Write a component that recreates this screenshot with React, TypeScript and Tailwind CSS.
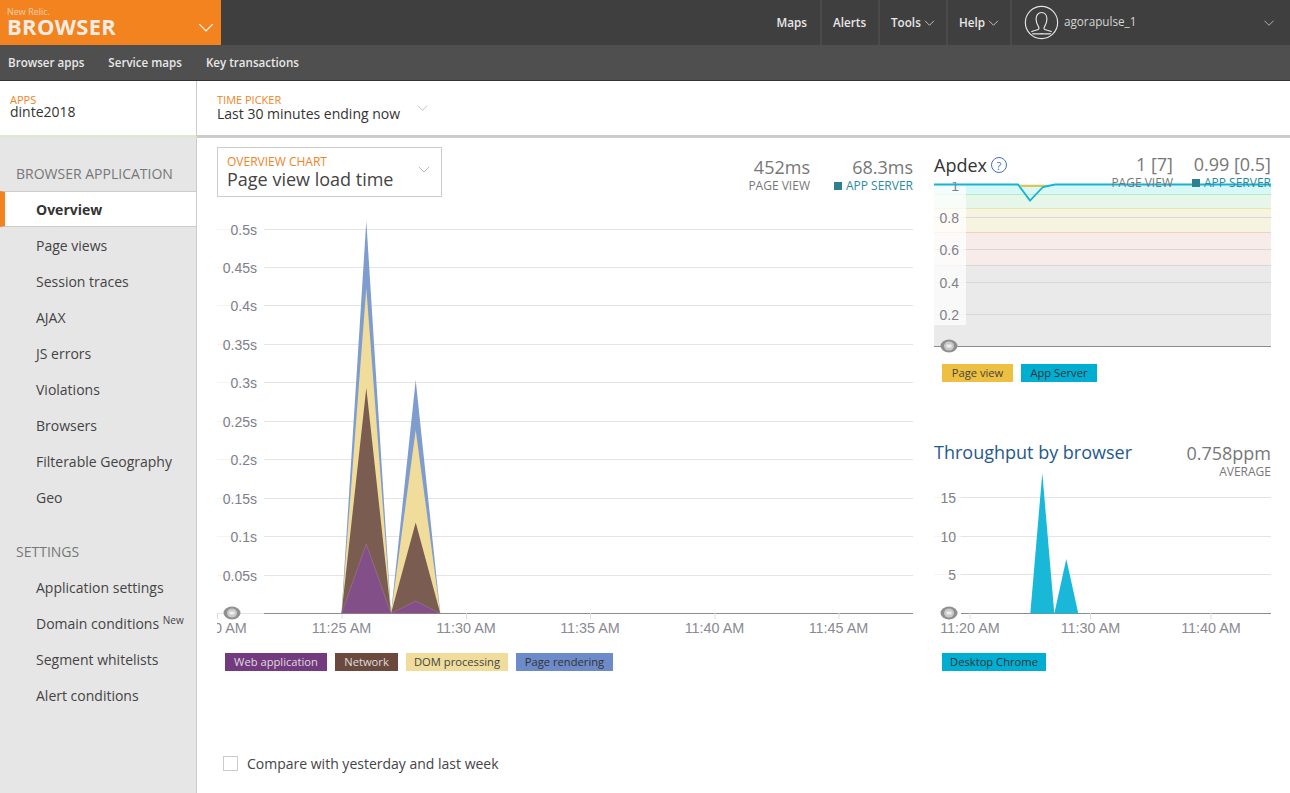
import React from 'react';

const Chevron = ({ className }: { className: string }) => (
  <svg viewBox="0 0 14 8" className={className} fill="none" stroke="currentColor" strokeWidth="1">
    <path d="M1 1l6 6 6-6" />
  </svg>
);

const Avatar = () => (
  <svg viewBox="0 0 36 36" className="h-[35px] w-[35px] shrink-0 text-[#e4e4e4]" fill="none" stroke="currentColor" strokeWidth="1.2">
    <circle cx="18" cy="18" r="16.6" />
    <path d="M7.5 27.5c3-1.6 6.2-1.6 7.5-2.6 .8-.7 .5-1.5 0-2.4-1.4-2.4-2.6-5-2.6-8 0-4 2.2-6.8 5.6-6.8s5.6 2.8 5.6 6.8c0 3-1.2 5.6-2.6 8-.5 .9-.8 1.7 0 2.4 1.3 1 4.5 1 7.5 2.6" />
    <path d="M8.5 29.5c3 .6 6 .2 9.500 0 3.500 .2 6.500 .6 9.500 0" />
  </svg>
);

const Knob = ({ cx, cy }: { cx: number; cy: number }) => (
  <g>
    <ellipse cx={cx} cy={cy} rx="8.500" ry="6.500" fill="#8f8f8f" />
    <ellipse cx={cx} cy={cy} rx="5" ry="4.500" fill="#c9c9c9" />
    <rect x={cx - 2.500} y={cy - 1.500} width="5" height="3" fill="#eeeeee" />
  </g>
);

const mainGrid = [
  ['0.5s', 229.5],
  ['0.45s', 267.5],
  ['0.4s', 305.5],
  ['0.35s', 344.5],
  ['0.3s', 382.5],
  ['0.25s', 421.5],
  ['0.2s', 459.5],
  ['0.15s', 498.5],
  ['0.1s', 536.5],
  ['0.05s', 575.5],
] as const;

const mainTicks = [
  ['11:20 AM', 217],
  ['11:25 AM', 341.5],
  ['11:30 AM', 466],
  ['11:35 AM', 590],
  ['11:40 AM', 714.5],
  ['11:45 AM', 838.5],
] as const;

const MainChart = () => (
  <svg viewBox="217 215 696 425" className="block h-[425px] w-[696px]" style={{ fontFamily: '"Liberation Sans", sans-serif' }}>
    {mainGrid.map(([label, y]) => (
      <g key={label}>
        <line x1="217" x2="257" y1={y} y2={y} stroke="#f4f4f4" />
        <line x1="264" x2="913" y1={y} y2={y} stroke="#e4e4e4" />
        <text x="257" y={y + 5} textAnchor="end" fontSize="14" fill="#80808a">{label}</text>
      </g>
    ))}
    <line x1="217" x2="264" y1="613.5" y2="613.5" stroke="#e4e4e4" />
    <line x1="264" x2="913" y1="613.5" y2="613.5" stroke="#8c8c8c" />
    {mainTicks.map(([label, x]) => (
      <g key={label}>
        <line x1={x + 0.5} x2={x + 0.5} y1="613" y2="619" stroke="#dddddd" />
        <text x={x} y="633" textAnchor="middle" fontSize="14.4" fill="#8a8a92">{label}</text>
      </g>
    ))}
    <path d="M341.500 613.500L366.300 221L391 613.500L415.700 380L440.300 613.500Z" fill="#7f9ccf" />
    <path d="M341.500 613.500L366.300 288L391 613.500L415.700 430L440.300 613.500Z" fill="#f0dd9c" />
    <path d="M341.500 613.500L366.300 388L391 613.500L415.700 522.500L440.300 613.500Z" fill="#7a5c50" />
    <path d="M341.500 613.500L366.300 544L391 613.500L415.700 601L440.300 613.500Z" fill="#824f88" stroke="#9a7a90" strokeWidth="0.6" />
    <Knob cx={232} cy={613} />
  </svg>
);

const apdexLines = [
  ['0.8', 217.5],
  ['0.6', 249.5],
  ['0.4', 282.5],
  ['0.2', 314.5],
] as const;

const ApdexChart = () => (
  <svg viewBox="934 182 337 172" className="block h-[172px] w-[337px]" style={{ fontFamily: '"Liberation Sans", sans-serif' }}>
    <rect x="934" y="184" width="337" height="10" fill="#d8f8f8" />
    <rect x="934" y="194" width="337" height="14.500" fill="#e6f6e8" />
    <rect x="934" y="208.500" width="337" height="24" fill="#f6f3e0" />
    <rect x="934" y="232.500" width="337" height="33" fill="#f8eceb" />
    <rect x="934" y="265.500" width="337" height="81" fill="#eaeaea" />
    <line x1="934" x2="1271" y1="194.500" y2="194.500" stroke="#b5ecc4" />
    <line x1="934" x2="1271" y1="208.500" y2="208.500" stroke="#e4e6b4" />
    <line x1="934" x2="1271" y1="232.500" y2="232.500" stroke="#f2cfc0" />
    <line x1="934" x2="1271" y1="265.500" y2="265.500" stroke="#d8d8d8" />
    {apdexLines.map(([, y]) => (
      <line key={y} x1="934" x2="1271" y1={y} y2={y} stroke="#d8d8d8" />
    ))}
    <rect x="934" y="184" width="32" height="141" fill="#ffffff" fillOpacity="0.72" />
    <text x="959" y="191" textAnchor="end" fontSize="14" fill="#80808a">1</text>
    {apdexLines.map(([label, y]) => (
      <text key={label} x="959" y={y + 5} textAnchor="end" fontSize="14" fill="#80808a">{label}</text>
    ))}
    <line x1="934" x2="1271" y1="346.500" y2="346.500" stroke="#8c8c8c" />
    <path d="M1018 185L1055 185L1043 187L1022 187Z" fill="#ecc043" />
    <path d="M934 184.500H1018L1030 200.500L1043 187L1055 184.500H1271" fill="none" stroke="#16b4cf" strokeWidth="1.8" />
    <Knob cx={949} cy={346} />
  </svg>
);

const tpGrid = [
  ['15', 497.5],
  ['10', 536.5],
  ['5', 574.5],
] as const;

const tpTicks = [
  ['11:20 AM', 970],
  ['11:30 AM', 1090.5],
  ['11:40 AM', 1211],
] as const;

const ThroughputChart = () => (
  <svg viewBox="934 470 337 170" className="block h-[170px] w-[337px]" style={{ fontFamily: '"Liberation Sans", sans-serif' }}>
    {tpGrid.map(([label, y]) => (
      <g key={label}>
        <line x1="934" x2="961" y1={y} y2={y} stroke="#f4f4f4" />
        <line x1="961" x2="1271" y1={y} y2={y} stroke="#e4e4e4" />
        <text x="956" y={y + 5} textAnchor="end" fontSize="14" fill="#80808a">{label}</text>
      </g>
    ))}
    <line x1="961" x2="1271" y1="613.500" y2="613.500" stroke="#8c8c8c" />
    {tpTicks.map(([label, x]) => (
      <g key={label}>
        <line x1={x} x2={x} y1="613" y2="619" stroke="#dddddd" />
        <text x={x} y="633" textAnchor="middle" fontSize="14.4" fill="#8a8a92">{label}</text>
      </g>
    ))}
    <path d="M1030.300 613.500L1042.300 473L1054.300 613.500Z" fill="#1ab8d8" />
    <path d="M1054.300 613.500L1066.300 559L1078.300 613.500Z" fill="#1ab8d8" />
    <Knob cx={949} cy={613} />
  </svg>
);

const Legend = ({ bg, text, width, children }: { bg: string; text: string; width: string; children: string }) => (
  <span className={`flex h-[18px] items-center justify-center text-[11.2px] ${bg} ${text} ${width}`}>{children}</span>
);

const SideItem = ({ children, active }: { children: React.ReactNode; active?: boolean }) => (
  <li
    className={
      active
        ? 'flex h-[36px] items-center border-y border-[#cccccc] border-l-[5px] border-l-[#f2831f] bg-white pl-[31px] font-bold text-[#333333]'
        : 'flex h-[36px] items-center pl-[36px] text-[#444444]'
    }
  >
    <span>{children}</span>
  </li>
);

export default function App() {
  return (
    <div className="flex h-[793px] w-[1290px] flex-col overflow-hidden bg-white text-[14px]" style={{ fontFamily: '"Open Sans", sans-serif' }}>
      {/* top nav */}
      <div className="flex h-[45px] bg-[#3f3f3f] text-[11.7px] font-semibold text-[#e8e8e8]">
        <div className="flex w-[221px] justify-between bg-[#f2831f] pl-[7px] pr-[7px] text-[#f3ece4]">
          <div>
            <div className="mt-[7px] text-[9px] leading-[10px] font-normal opacity-70">New Relic.</div>
            <div className="text-[22px] leading-[19px] font-bold tracking-[0.3px]">BROWSER</div>
          </div>
          <Chevron className="mt-[23px] h-[9px] w-[16px] text-white" />
        </div>
        <div className="flex flex-1 items-center justify-end">
          <div className="flex h-full items-center pr-[13px]">Maps</div>
          <div className="flex h-full w-[58px] items-center border-l-2 border-[#4a4a4a] pl-[11px]">Alerts</div>
          <div className="flex h-full w-[68px] items-center gap-[3px] border-l-2 border-[#4a4a4a] pl-[11px]">
            Tools <Chevron className="h-[6px] w-[11px]" />
          </div>
          <div className="flex h-full w-[64px] items-center gap-[3px] border-l-2 border-[#4a4a4a] pl-[11px]">
            Help <Chevron className="h-[6px] w-[11px]" />
          </div>
          <div className="flex h-full w-[280px] items-center border-l-2 border-[#4a4a4a] pl-[12px] pr-[15px] font-normal text-[#d5d5d5]">
            <Avatar />
            <span className="ml-[5px] flex-1 pb-[1px]">agorapulse_1</span>
            <Chevron className="h-[6px] w-[12px]" />
          </div>
        </div>
      </div>

      {/* sub nav */}
      <div className="flex h-[36px] items-center gap-[24px] border-b border-[#333333] bg-[#4f4f4f] pl-[8px] text-[11.6px] font-semibold text-[#e8e8e8]">
        <span>Browser apps</span>
        <span>Service maps</span>
        <span>Key transactions</span>
      </div>

      {/* picker row */}
      <div className="flex h-[57px] border-b-[3px] border-[#cccccc]">
        <div className="-mb-[3px] w-[197px] border-r border-[#cccccc] border-b-[3px] border-b-[#e0e8d4] pl-[10px] pt-[13px]">
          <div className="text-[11px] leading-[12px] text-[#f2831f]">APPS</div>
          <div className="text-[14px] leading-[12px] text-[#333333]">dinte2018</div>
        </div>
        <div className="flex pl-[20px] pt-[13px]">
          <div>
            <div className="text-[11px] leading-[12px] text-[#f2831f]">TIME PICKER</div>
            <div className="text-[14px] leading-[15px] text-[#333333]">Last 30 minutes ending now</div>
          </div>
          <Chevron className="ml-[17px] mt-[11px] h-[6px] w-[11px] text-[#aaaaaa]" />
        </div>
      </div>

      <div className="flex flex-1">
        {/* sidebar */}
        <div className="w-[197px] border-r border-[#cccccc] bg-[#e6e6e6] pt-[26px]">
          <div className="pl-[16px] leading-[20px] text-[#777777]">BROWSER APPLICATION</div>
          <ul className="mt-[7px]">
            <SideItem active>Overview</SideItem>
            <SideItem>Page views</SideItem>
            <SideItem>Session traces</SideItem>
            <SideItem>AJAX</SideItem>
            <SideItem>JS errors</SideItem>
            <SideItem>Violations</SideItem>
            <SideItem>Browsers</SideItem>
            <SideItem>Filterable Geography</SideItem>
            <SideItem>Geo</SideItem>
          </ul>
          <div className="mt-[27px] pl-[16px] leading-[20px] text-[#777777]">SETTINGS</div>
          <ul className="mt-[7px]">
            <SideItem>Application settings</SideItem>
            <SideItem>
              Domain conditions <sup className="text-[10px] leading-none">New</sup>
            </SideItem>
            <SideItem>Segment whitelists</SideItem>
            <SideItem>Alert conditions</SideItem>
          </ul>
        </div>

        {/* left column */}
        <div className="w-[716px] pl-[20px] pt-[9px]">
          <div className="flex items-start justify-between">
            <div className="flex h-[50px] w-[225px] justify-between border border-[#cccccc] pl-[9px] pr-[11px] pt-[7px]">
              <div>
                <div className="text-[12px] leading-[13px] text-[#f2831f]">OVERVIEW CHART</div>
                <div className="text-[18px] leading-[23px] text-[#444444]">Page view load time</div>
              </div>
              <Chevron className="mt-[11px] h-[7px] w-[12px] text-[#aaaaaa]" />
            </div>
            <div className="flex gap-[24px] pt-[10px] text-right">
              <div>
                <div className="text-[18px] leading-[20px] text-[#777777]">452ms</div>
                <div className="text-[12px] leading-[18px] text-[#777777]">PAGE VIEW</div>
              </div>
              <div>
                <div className="text-[18px] leading-[20px] text-[#777777]">68.3ms</div>
                <div className="flex items-center text-[12px] leading-[18px] text-[#2b8aa0]">
                  <span className="mr-[4px] h-[8px] w-[8px] bg-[#2f7f93]" />
                  APP SERVER
                </div>
              </div>
            </div>
          </div>
          <div className="mt-[18px]">
            <MainChart />
          </div>
          <div className="mt-[13px] flex gap-[8px] pl-[8px]">
            <Legend bg="bg-[#733a80]" text="text-[#dddddd]" width="w-[102px]">Web application</Legend>
            <Legend bg="bg-[#6b4a3d]" text="text-[#dddddd]" width="w-[63px]">Network</Legend>
            <Legend bg="bg-[#f0dd9c]" text="text-[#444444]" width="w-[102px]">DOM processing</Legend>
            <Legend bg="bg-[#6d8bc8]" text="text-[#333333]" width="w-[97px]">Page rendering</Legend>
          </div>
          <label className="mt-[82px] flex items-center pl-[6px] text-[14px] text-[#444444]">
            <span className="mr-[9px] h-[15px] w-[15px] border border-[#cccccc] bg-white" />
            Compare with yesterday and last week
          </label>
        </div>

        {/* right column */}
        <div className="ml-[21px] w-[337px] pt-[15px]">
          <div className="relative z-10 flex items-start justify-between">
            <div className="flex items-center text-[18px] leading-[24px] text-[#333333]">
              Apdex
              <span className="ml-[4px] flex h-[16px] w-[16px] items-center justify-center rounded-full border border-[#4a6fc0] text-[11px] leading-none text-[#4a6fc0]">?</span>
            </div>
            <div className="flex gap-[19px] text-right">
              <div>
                <div className="text-[18px] leading-[22px] text-[#777777]">1 [7]</div>
                <div className="text-[12px] leading-[15px] text-[#777777]">PAGE VIEW</div>
              </div>
              <div>
                <div className="text-[18px] leading-[22px] text-[#777777]">0.99 [0.5]</div>
                <div className="flex items-center justify-end text-[12px] leading-[15px] text-[#2b8aa0]">
                  <span className="mr-[4px] h-[8px] w-[8px] bg-[#2f7f93]" />
                  APP SERVER
                </div>
              </div>
            </div>
          </div>
          <div className="-mt-[8px]">
            <ApdexChart />
          </div>
          <div className="mt-[10px] flex gap-[8px] pl-[8px]">
            <Legend bg="bg-[#edc041]" text="text-[#444444]" width="w-[71px]">Page view</Legend>
            <Legend bg="bg-[#00aed1]" text="text-[#333333]" width="w-[76px]">App Server</Legend>
          </div>
          <div className="mt-[58px] flex items-start justify-between">
            <div className="text-[18px] leading-[24px] text-[#25598c]">Throughput by browser</div>
            <div className="pt-[1px] text-right">
              <div className="text-[18px] leading-[24px] text-[#777777]">0.758ppm</div>
              <div className="text-[12px] leading-[14px] text-[#777777]">AVERAGE</div>
            </div>
          </div>
          <div className="-mt-[9px]">
            <ThroughputChart />
          </div>
          <div className="mt-[13px] flex pl-[8px]">
            <Legend bg="bg-[#00aed1]" text="text-[#333333]" width="w-[104px]">Desktop Chrome</Legend>
          </div>
        </div>
      </div>
    </div>
  );
}
